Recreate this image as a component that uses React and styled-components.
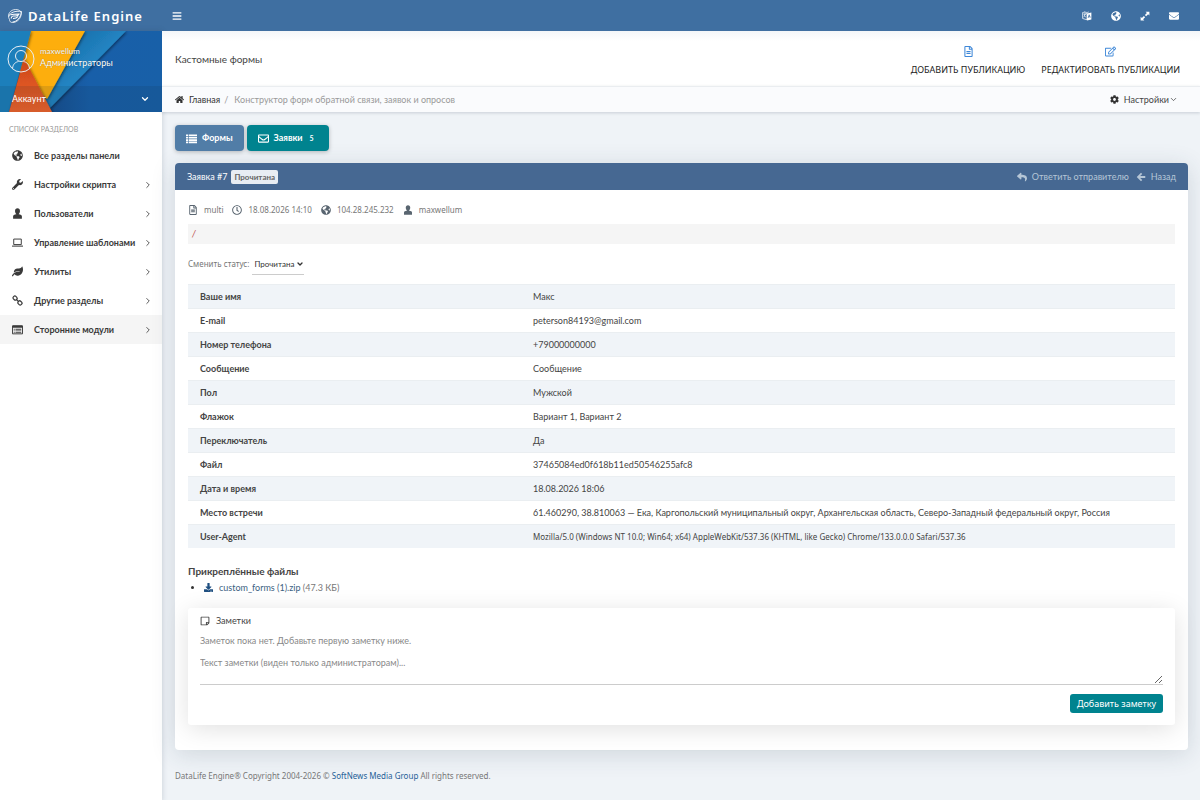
import React, { useState } from "react";
import styled, { createGlobalStyle } from "styled-components";
import {
    FaBars,
    FaCog,
    FaDownload,
    FaEnvelope,
    FaGlobeAmericas,
    FaHome,
    FaLeaf,
    FaRegClock,
    FaRegEdit,
    FaRegEnvelope,
    FaRegFileAlt,
    FaRegStickyNote,
    FaReply,
    FaWrench,
} from "react-icons/fa";
import { FiChevronDown, FiChevronRight } from "react-icons/fi";

const Glyph = ({ children }) => (
    <svg viewBox="0 0 16 16" width="1em" height="1em" fill="currentColor" stroke="none" aria-hidden="true">
        {children}
    </svg>
);

const UserIcon = () => (
    <Glyph>
        <path d="M8 0.5c-2.3 0-3.6 1.6-3.6 3.9 0 1.800.9 3.400 1.800 4.200v.6C3.400 9.500 1.600 10.500 1.600 12v3.500h12.800V12c0-1.500-1.800-2.500-4.600-2.800v-.6c.9-.8 1.800-2.400 1.800-4.200C11.600 2.100 10.300.5 8 .5z" />
    </Glyph>
);

const LanguageIcon = () => (
    <Glyph>
        <path d="M1 2.500l7 1.500v10l-7-2z" fill="none" stroke="currentColor" strokeWidth="1.200" />
        <path d="M2.500 5.500h4M4.500 4.500v1c0 2-1 3.500-2 4.500M3 7l3.500 3M3 1l5 1.500 3-1" fill="none" stroke="currentColor" />
        <path d="M8 4l7-1.500v11L8 15z" />
        <path d="M9.800 11l1.700-5 1.800 4.500M10.300 9.500l2.500-.4" fill="none" stroke="#3f6fa1" strokeWidth="1.200" />
    </Glyph>
);

const ExpandIcon = () => (
    <Glyph>
        <path d="M9 1h6v6l-2-2-3.200 3.200-2-2L11 3zM7 15H1V9l2 2 3.200-3.200 2 2L5 13z" />
    </Glyph>
);

const BackIcon = () => (
    <Glyph>
        <path d="M8 1.200L1.200 8 8 14.800l2-2-3.300-3.300h8.100v-3H6.700L10 3.200z" />
    </Glyph>
);

const ListIcon = () => (
    <Glyph>
        <path d="M0 2h3v2.500H0zM4 2h12v2.500H4zM0 5.500h3V8H0zM4 5.500h12V8H4zM0 9h3v2.500H0zM4 9h12v2.500H4zM0 12.500h3V15H0zM4 12.500h12V15H4z" />
    </Glyph>
);

const LaptopIcon = () => (
    <Glyph>
        <path d="M2.500 3h11v8h-11z" fill="none" stroke="currentColor" strokeWidth="1.400" />
        <path d="M0 12.500h16V14H0z" />
    </Glyph>
);

const ChainIcon = () => (
    <Glyph>
        <g fill="none" stroke="currentColor" strokeWidth="1.800">
            <rect x="1.500" y="2" width="6" height="5" rx="2" transform="rotate(45 4.500 4.500)" />
            <rect x="8.500" y="9" width="6" height="5" rx="2" transform="rotate(45 11.500 11.500)" />
            <path d="M6 6l4 4" />
        </g>
    </Glyph>
);

const ModulesIcon = () => (
    <Glyph>
        <path d="M.7 2.700h14.600v11.600H.7z" fill="none" stroke="currentColor" strokeWidth="1.400" />
        <path d="M1 2h14v3.500H1zM2.500 7H4v1.300H2.500zM5 7h8.500v1.300H5zM2.500 9.300H4v1.300H2.500zM5 9.300h8.500v1.300H5zM2.500 11.500H4v1.300H2.500zM5 11.500h8.500v1.300H5z" />
    </Glyph>
);

const LogoIcon = () => (
    <svg viewBox="0 0 32 32" width="16" height="16" fill="none" stroke="#fff" aria-hidden="true">
        <path d="M5 23C-1 13 7 3 17 3c9 0 13 5 11 12-2 8-9 14-17 14-4 0-6-2-6-6" strokeWidth="1.500" />
        <path d="M4 17C5 9 17 5 29 7M11 28c8 0 17-9 18-21" strokeWidth="1.800" />
        <path d="M7 14c5-2 11-2 17-2-1 3-3 4-7 4h-5c-2 0-3 2-4 5M12 21c5 0 8-1 10-4" strokeWidth="2.200" />
    </svg>
);

const AvatarIcon = () => (
    <svg viewBox="0 0 28 28" width="28" height="28" fill="none" stroke="#e9eef3" strokeWidth="1" aria-hidden="true">
        <circle cx="14" cy="14" r="13" />
        <circle cx="14" cy="11" r="5.500" />
        <path d="M5.500 23.500c.5-5 3.500-6.500 6-7M22.500 23.500c-.5-5-3.500-6.500-6-7" />
    </svg>
);

const ProfileArt = () => (
    <ArtSvg viewBox="0 0 162 81" preserveAspectRatio="none" aria-hidden="true">
        <defs>
            <linearGradient id="deep" x1="0" x2="1">
                <stop offset="0.300" stopColor="#164f91" />
                <stop offset="0.550" stopColor="#185fa9" />
                <stop offset="1" stopColor="#1860a8" />
            </linearGradient>
            <linearGradient id="mid" x1="0" y1="0" x2="1" y2="1">
                <stop offset="0" stopColor="#14619b" />
                <stop offset="0.500" stopColor="#2284c2" />
                <stop offset="1" stopColor="#1d73b4" />
            </linearGradient>
            <linearGradient id="red" x1="0" y1="0" x2="0" y2="1">
                <stop offset="0" stopColor="#c8461a" />
                <stop offset="1" stopColor="#f4642a" />
            </linearGradient>
            <filter id="soft" x="-20%" y="-20%" width="140%" height="140%">
                <feDropShadow dx="1" dy="1" stdDeviation="1.500" floodOpacity="0.500" />
            </filter>
        </defs>
        <rect width="162" height="81" fill="url(#deep)" />
        <path d="M60 0h66L50 77l-8-10z" fill="url(#mid)" filter="url(#soft)" />
        <path d="M20 0h65L47 68 18 40z" fill="#fdae0b" filter="url(#soft)" />
        <path d="M0 0h31L9 81H0z" fill="#1e7fbb" filter="url(#soft)" />
        <path d="M24 27l28 54H9z" fill="url(#red)" filter="url(#soft)" />
    </ArtSvg>
);

const menuItems = [
    { label: "Все разделы панели", icon: FaGlobeAmericas },
    { label: "Настройки скрипта", icon: FaWrench, nested: true },
    { label: "Пользователи", icon: UserIcon, nested: true },
    { label: "Управление шаблонами", icon: LaptopIcon, nested: true },
    { label: "Утилиты", icon: FaLeaf, nested: true },
    { label: "Другие разделы", icon: ChainIcon, nested: true },
    { label: "Сторонние модули", icon: ModulesIcon, nested: true, active: true },
];

const fields = [
    { name: "Ваше имя", value: "Макс" },
    { name: "E-mail", value: "peterson84193@gmail.com" },
    { name: "Номер телефона", value: "+79000000000" },
    { name: "Сообщение", value: "Сообщение" },
    { name: "Пол", value: "Мужской" },
    { name: "Флажок", value: "Вариант 1, Вариант 2" },
    { name: "Переключатель", value: "Да" },
    { name: "Файл", value: "37465084ed0f618b11ed50546255afc8" },
    { name: "Дата и время", value: "18.08.2026 18:06" },
    { name: "Место встречи", value: "61.460290, 38.810063 — Ека, Каргопольский муниципальный округ, Архангельская область, Северо-Западный федеральный округ, Россия" },
    { name: "User-Agent", value: "Mozilla/5.0 (Windows NT 10.0; Win64; x64) AppleWebKit/537.36 (KHTML, like Gecko) Chrome/133.0.0.0 Safari/537.36", compact: true },
];

const App = () => {
    const [status, setStatus] = useState("read");
    const [note, setNote] = useState("");

    return (
        <>
            <GlobalStyle />
            <Page>
                <TopBar>
                    <Brand href="#">
                        <LogoIcon />
                        DataLife Engine
                    </Brand>
                    <IconButton aria-label="Меню"><FaBars /></IconButton>
                    <TopActions>
                        <IconButton aria-label="Язык"><LanguageIcon /></IconButton>
                        <IconButton aria-label="Сайт"><FaGlobeAmericas /></IconButton>
                        <IconButton aria-label="Развернуть"><ExpandIcon /></IconButton>
                        <IconButton aria-label="Сообщения"><FaEnvelope /></IconButton>
                    </TopActions>
                </TopBar>

                <Body>
                    <Sidebar>
                        <Profile>
                            <ProfileArt />
                            <ProfileUser>
                                <AvatarIcon />
                                <div>
                                    <ProfileName>maxwellum</ProfileName>
                                    <div>Администраторы</div>
                                </div>
                            </ProfileUser>
                            <AccountButton>
                                Аккаунт
                                <FiChevronDown />
                            </AccountButton>
                        </Profile>
                        <MenuTitle>СПИСОК РАЗДЕЛОВ</MenuTitle>
                        <nav>
                            {menuItems.map(({ label, icon: Icon, nested, active }) => (
                                <MenuLink href="#" key={label} $active={active}>
                                    <Icon />
                                    <span>{label}</span>
                                    {nested && <FiChevronRight />}
                                </MenuLink>
                            ))}
                        </nav>
                    </Sidebar>

                    <Main>
                        <PageHeader>
                            <PageTitle>Кастомные формы</PageTitle>
                            <HeaderLinks>
                                <HeaderLink href="#">
                                    <FaRegFileAlt />
                                    ДОБАВИТЬ ПУБЛИКАЦИЮ
                                </HeaderLink>
                                <HeaderLink href="#">
                                    <FaRegEdit />
                                    РЕДАКТИРОВАТЬ ПУБЛИКАЦИИ
                                </HeaderLink>
                            </HeaderLinks>
                        </PageHeader>
                        <Breadcrumb>
                            <FaHome />
                            <a href="#">Главная</a>
                            <i>/</i>
                            <span>Конструктор форм обратной связи, заявок и опросов</span>
                            <SettingsButton>
                                <FaCog />
                                Настройки
                                <FiChevronDown />
                            </SettingsButton>
                        </Breadcrumb>

                        <Content>
                            <Tabs>
                                <TabButton>
                                    <ListIcon />
                                    Формы
                                </TabButton>
                                <TabButton $active>
                                    <FaRegEnvelope />
                                    Заявки
                                    <small>5</small>
                                </TabButton>
                            </Tabs>

                            <Panel>
                                <PanelHeader>
                                    Заявка #7
                                    <StatusLabel>Прочитана</StatusLabel>
                                    <PanelActions>
                                        <a href="#"><FaReply />Ответить отправителю</a>
                                        <a href="#"><BackIcon />Назад</a>
                                    </PanelActions>
                                </PanelHeader>
                                <PanelBody>
                                    <Meta>
                                        <span><FaRegFileAlt />multi</span>
                                        <span><FaRegClock />18.08.2026 14:10</span>
                                        <span><FaGlobeAmericas />104.28.245.232</span>
                                        <span><UserIcon />maxwellum</span>
                                    </Meta>
                                    <PathLine>/</PathLine>
                                    <StatusRow>
                                        <label htmlFor="status">Сменить статус:</label>
                                        <SelectWrap>
                                            <StatusSelect id="status" value={status} onChange={(e) => setStatus(e.target.value)}>
                                                <option value="read">Прочитана</option>
                                            </StatusSelect>
                                            <FiChevronDown />
                                        </SelectWrap>
                                    </StatusRow>
                                    <FieldTable>
                                        <tbody>
                                            {fields.map(({ name, value, compact }) => (
                                                <tr key={name}>
                                                    <th scope="row">{name}</th>
                                                    <FieldValue $compact={compact}>{value}</FieldValue>
                                                </tr>
                                            ))}
                                        </tbody>
                                    </FieldTable>
                                    <FilesTitle>Прикреплённые файлы</FilesTitle>
                                    <FileList>
                                        <li>
                                            <a href="#"><FaDownload />custom_forms (1).zip</a> (47.3 КБ)
                                        </li>
                                    </FileList>
                                    <Notes>
                                        <NotesTitle><FaRegStickyNote />Заметки</NotesTitle>
                                        <p>Заметок пока нет. Добавьте первую заметку ниже.</p>
                                        <NoteInput
                                            aria-label="Текст заметки"
                                            placeholder="Текст заметки (виден только администраторам)..."
                                            value={note}
                                            onChange={(e) => setNote(e.target.value)}
                                        />
                                        <AddButton>Добавить заметку</AddButton>
                                    </Notes>
                                </PanelBody>
                            </Panel>

                            <Footer>
                                DataLife Engine® Copyright 2004-2026 © <a href="#">SoftNews Media Group</a> All rights reserved.
                            </Footer>
                        </Content>
                    </Main>
                </Body>
            </Page>
        </>
    );
};

const GlobalStyle = createGlobalStyle`
    * {
        box-sizing: border-box;
    }

    body {
        margin: 0;
        background: #eff3f7;
        color: #444;
        font: 9px/14px Lato, "Noto Sans", sans-serif;
    }

    button, select, textarea {
        font: inherit;
    }

    button {
        border: none;
        cursor: pointer;
    }

    a {
        color: inherit;
        text-decoration: none;
    }

    svg {
        flex: none;
    }
`;

const Page = styled.div`
    display: flex;
    flex-direction: column;
    min-height: 100vh;
`;

const TopBar = styled.header`
    display: flex;
    align-items: center;
    height: 31px;
    padding-right: 21px;
    background: #3f6fa1;
    color: #fff;
`;

const Brand = styled.a`
    display: flex;
    align-items: center;
    gap: 5px;
    width: 162px;
    padding-left: 7px;
    font-family: "Noto Sans", sans-serif;
    font-size: 13px;
    font-weight: 600;
    letter-spacing: 1px;
    white-space: nowrap;
`;

const IconButton = styled.button`
    display: flex;
    padding: 0;
    margin-left: 10px;
    background: none;
    color: #fff;
    font-size: 10px;
`;

const TopActions = styled.div`
    display: flex;
    gap: 9px;
    margin-left: auto;
`;

const Body = styled.div`
    display: flex;
    flex: 1;
`;

const Sidebar = styled.aside`
    flex: none;
    width: 162px;
    background: #fff;
    box-shadow: 0 0 6px rgba(40, 60, 80, 0.2);
`;

const Profile = styled.div`
    position: relative;
    color: #fff;
    text-shadow: 0 0 1px rgba(0, 0, 0, 0.4);
`;

const ArtSvg = styled.svg`
    position: absolute;
    inset: 0;
    width: 100%;
    height: 100%;
`;

const ProfileUser = styled.div`
    position: relative;
    display: flex;
    align-items: center;
    gap: 5px;
    height: 55px;
    padding-left: 7px;
    line-height: 12px;

    > div {
        padding-bottom: 4px;
    }
`;

const ProfileName = styled.div`
    font-size: 8px;
`;

const AccountButton = styled.button`
    position: relative;
    display: flex;
    align-items: center;
    justify-content: space-between;
    width: 100%;
    height: 26px;
    padding: 0 12px;
    background: rgba(20, 40, 60, 0.12);
    color: #fff;

    svg {
        font-size: 10px;
        stroke-width: 3;
    }
`;

const MenuTitle = styled.div`
    padding: 10px 9px 5px;
    color: #999;
    font-size: 7px;
`;

const MenuLink = styled.a`
    display: flex;
    align-items: center;
    height: 29px;
    padding: 0 9px 0 12px;
    background: ${({ $active }) => ($active ? "#f5f5f5" : "transparent")};
    color: #3a3a3a;
    font-weight: 700;

    svg {
        font-size: 11px;
    }

    span {
        flex: 1;
        margin-left: 11px;
        white-space: nowrap;
    }

    span + svg {
        font-size: 10px;
    }
`;

const Main = styled.main`
    flex: 1;
    min-width: 0;
`;

const PageHeader = styled.div`
    display: flex;
    align-items: center;
    justify-content: space-between;
    height: 55px;
    padding: 0 20px 0 13px;
    background: linear-gradient(#f3f6f9, #fff 10px);
`;

const PageTitle = styled.h1`
    margin: 0;
    font-size: 10px;
    font-weight: 400;
`;

const HeaderLinks = styled.div`
    display: flex;
    gap: 16px;
    padding-top: 5px;
`;

const HeaderLink = styled.a`
    display: flex;
    flex-direction: column;
    align-items: center;
    gap: 6px;
    color: #222;
    font-family: "Noto Sans", sans-serif;

    svg {
        color: #3f88d8;
        font-size: 11px;
    }
`;

const Breadcrumb = styled.div`
    display: flex;
    align-items: center;
    height: 26px;
    padding: 0 22px 0 13px;
    border-top: 1px solid #eaedf0;
    background: #fafbfd;
    box-shadow: 0 1px 3px rgba(40, 60, 80, 0.2);
    color: #999;

    a {
        margin-left: 5px;
        color: #333;
    }

    i {
        margin: 0 6px 0 4px;
        font-style: normal;
    }

    > svg {
        color: #333;
    }
`;

const SettingsButton = styled.button`
    display: flex;
    align-items: center;
    margin-left: auto;
    padding: 0;
    background: none;
    color: #444;

    svg:first-child {
        margin-right: 5px;
        color: #333;
    }
`;

const Content = styled.div`
    padding: 13px 12px 0 13px;
`;

const Tabs = styled.div`
    display: flex;
    gap: 3px;
    margin-bottom: 12px;
`;

const TabButton = styled.button`
    display: flex;
    align-items: center;
    gap: 5px;
    height: 26px;
    padding: 0 11px;
    border-radius: 4px;
    background: ${({ $active }) => ($active ? "#00838f" : "#517da7")};
    box-shadow: 0 1px 4px rgba(0, 0, 0, 0.25);
    color: #fff;
    font-weight: 700;

    svg {
        font-size: 11px;
    }

    small {
        margin: 0 4px 0 2px;
        font-size: 7px;
    }
`;

const Panel = styled.section`
    border-radius: 4px;
    background: #fff;
    box-shadow: 0 4px 24px rgba(40, 60, 80, 0.16);
`;

const PanelHeader = styled.div`
    display: flex;
    align-items: center;
    gap: 4px;
    height: 27px;
    padding: 0 12px;
    border-radius: 4px 4px 0 0;
    background: #466892;
    color: #fff;
`;

const StatusLabel = styled.span`
    padding: 0 3px;
    border-radius: 2px;
    background: #e8edf3;
    color: #666;
    font-size: 8px;
    font-weight: 700;
`;

const PanelActions = styled.div`
    display: flex;
    gap: 7px;
    margin-left: auto;
    color: #b5c6d6;

    a {
        display: flex;
        align-items: center;
        gap: 5px;
    }

    svg {
        font-size: 10px;
    }
`;

const PanelBody = styled.div`
    padding: 13px 13px 25px;
`;

const Meta = styled.div`
    display: flex;
    gap: 9px;
    color: #777;
    font-family: "Noto Sans", sans-serif;
    font-size: 8px;

    span {
        display: flex;
        align-items: center;
        gap: 6px;
    }

    svg {
        color: #596570;
        font-size: 10px;
    }
`;

const PathLine = styled.div`
    margin-top: 7px;
    padding: 3px 4px;
    background: #f5f5f5;
    color: #b94a48;
    font-style: italic;
`;

const StatusRow = styled.div`
    display: flex;
    align-items: center;
    height: 40px;
    color: #777;
    font-size: 8px;

    label {
        font-family: "Noto Sans", sans-serif;
    }
`;

const SelectWrap = styled.div`
    display: flex;
    align-items: center;
    margin-left: 3px;
    border-bottom: 1px solid #ccc;
    color: #333;

    svg {
        margin-left: -9px;
        stroke-width: 4;
        pointer-events: none;
    }
`;

const StatusSelect = styled.select`
    height: 20px;
    padding: 0 10px 0 2px;
    border: none;
    background: none;
    color: #333;
    appearance: none;
`;

const FieldTable = styled.table`
    width: 100%;
    border-spacing: 0;
    table-layout: fixed;

    th, td {
        height: 24px;
        padding: 0 12px;
        border-top: 1px solid #eaeef1;
        text-align: left;
    }

    th {
        width: 338px;
        font-weight: 700;
    }

    tr:nth-child(odd) {
        background: #f0f4f8;
    }
`;

const FieldValue = styled.td`
    && {
        padding-left: 7px;
        font-family: ${({ $compact }) => ($compact ? '"Noto Sans", sans-serif' : "inherit")};
        font-size: ${({ $compact }) => ($compact ? "8px" : "9px")};
    }
`;

const FilesTitle = styled.h2`
    margin: 16px 0 3px;
    font-size: 10px;
    font-weight: 700;
`;

const FileList = styled.ul`
    margin: 0;
    padding-left: 16px;
    color: #777;

    li::marker {
        color: #333;
    }

    a {
        color: #3c5f82;
    }

    svg {
        margin-right: 6px;
        color: #1f4f80;
        vertical-align: -1px;
    }
`;

const Notes = styled.div`
    display: flex;
    flex-direction: column;
    margin-top: 13px;
    padding: 6px 12px 12px;
    border-radius: 3px;
    background: #fff;
    box-shadow: 0 4px 24px rgba(0, 0, 0, 0.12);

    p {
        margin: 6px 0;
        color: #888;
    }
`;

const NotesTitle = styled.div`
    display: flex;
    align-items: center;
    gap: 6px;

    svg {
        font-size: 10px;
    }
`;

const NoteInput = styled.textarea`
    width: 100%;
    height: 31px;
    padding: 2px 0;
    border: none;
    border-bottom: 1px solid #ccc;
    background: none;
    color: #444;
    resize: vertical;

    &::placeholder {
        color: #888;
    }
`;

const AddButton = styled.button`
    align-self: flex-end;
    height: 19px;
    margin-top: 9px;
    padding: 0 7px;
    border-radius: 3px;
    background: #00838f;
    color: #fff;
    font-family: "Noto Sans", sans-serif;
`;

const Footer = styled.footer`
    padding: 19px 0;
    color: #777;
    font-family: "Noto Sans", sans-serif;
    font-size: 8px;

    a {
        color: #1f5f97;
    }
`;

export default App;
